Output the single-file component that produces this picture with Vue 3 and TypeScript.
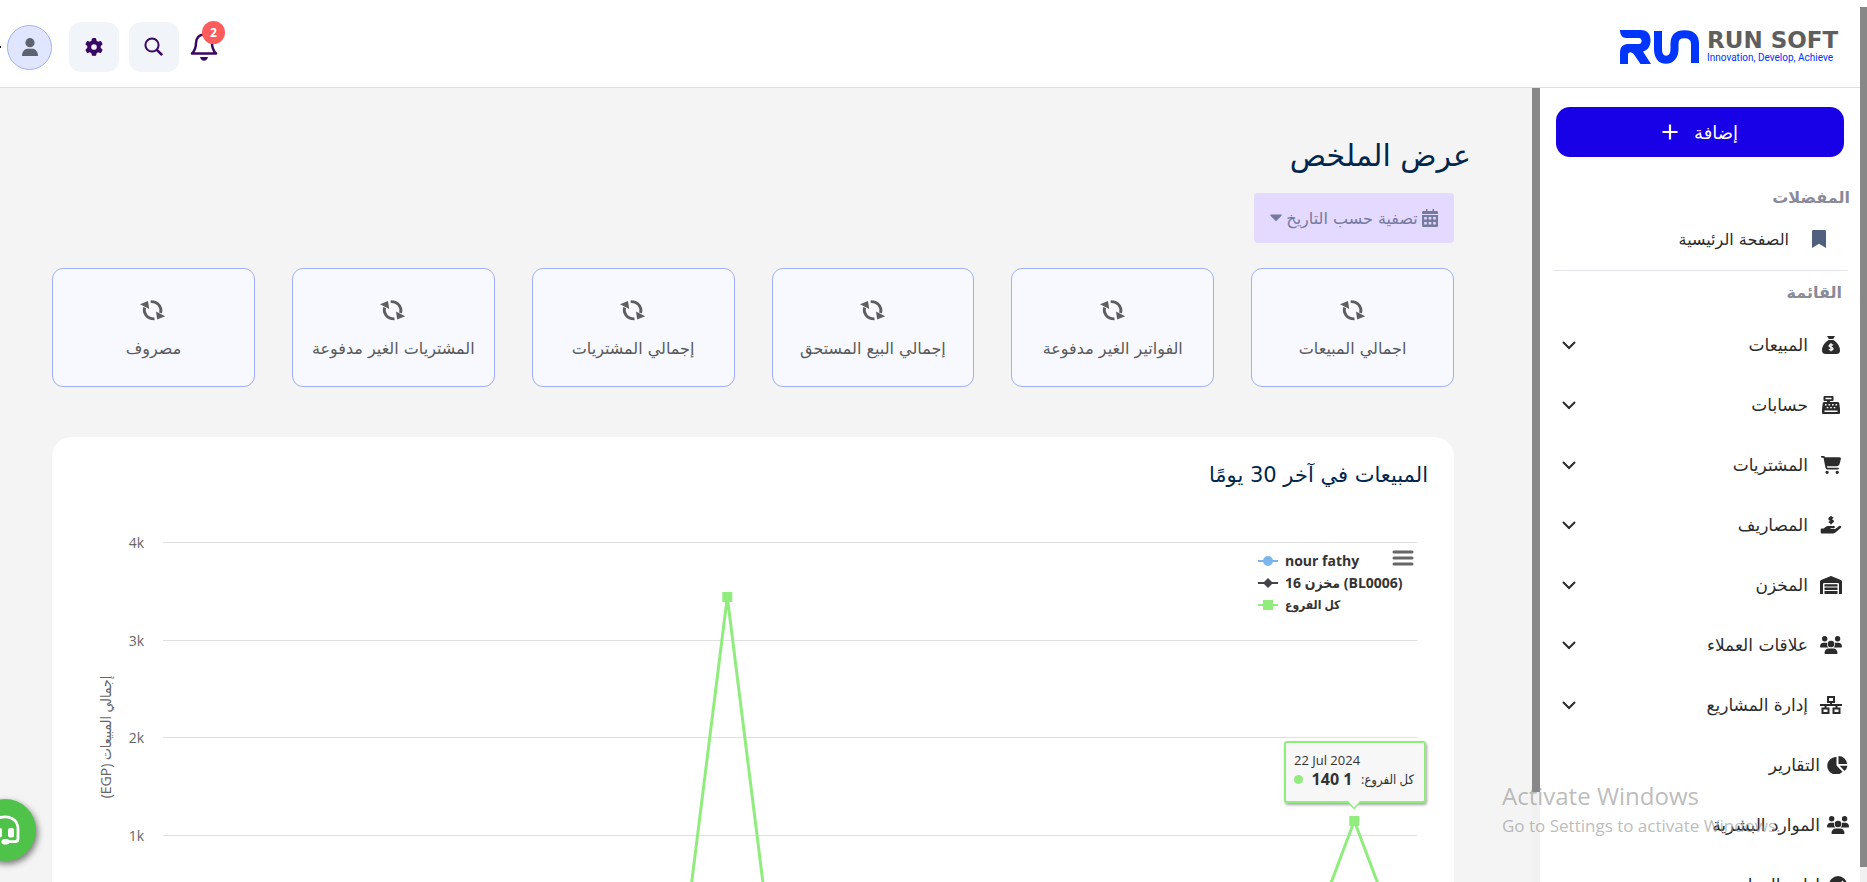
<script setup lang="ts">
import { computed, onBeforeUnmount, onMounted, ref } from 'vue'

interface Icon {
  box: string
  fill?: string
  stroke?: string
  light?: string
}

interface MenuItem {
  label: string
  icon: string
  flat?: boolean
}

const icons: Record<string, Icon> = {
  bag: {
    box: '0 0 22 18',
    fill: 'M7 0h8l-1.800 3h-4.400zM8.600 4h4.800c4.200 2.600 6.600 6.600 6.600 10.500 0 2.300-1.200 3.500-3.500 3.500h-11C3.200 18 2 16.800 2 14.500 2 10.600 4.400 6.600 8.600 4z',
    light: 'M13 9.200c-.6-.6-3.700-1-3.900.6-.1 1.700 4 .9 3.900 2.800-.1 1.700-3.300 1.500-4.100.5M11 7.300v8',
  },
  register: {
    box: '0 0 22 18',
    fill: 'M4.500 0h8a1 1 0 0 1 1 1v3a1 1 0 0 1-1 1H10v1h7.500c1 0 1.600.5 1.800 1.500L20 13v4a1 1 0 0 1-1 1H3a1 1 0 0 1-1-1v-4l.7-5.500C2.900 6.500 3.500 6 4.500 6H7V5H4.500a1 1 0 0 1-1-1V1a1 1 0 0 1 1-1zM5.500 1.800v1.400h6V1.800z',
    light: 'M5 8.800h1.600M8.500 8.800h1.600M12 8.800h1.600M15.500 8.800h1.600M6.700 11.600h1.600M10.200 11.600h1.600M13.700 11.600h1.600M4.500 15.300h13',
  },
  cart: {
    box: '0 0 576 512',
    fill: 'M0 24C0 10.700 10.700 0 24 0H69.500c22 0 41.500 12.800 50.600 32h411c26.300 0 45.500 25 38.600 50.400l-41 152.300c-8.500 31.400-37 53.300-69.500 53.300H170.700l5.400 28.500c2.200 11.300 12.100 19.500 23.600 19.500H488c13.300 0 24 10.700 24 24s-10.700 24-24 24H199.700c-34.600 0-64.300-24.600-70.700-58.500L77.400 54.500c-.7-3.800-4-6.500-7.900-6.500H24C10.700 48 0 37.300 0 24zM128 464a48 48 0 1 1 96 0 48 48 0 1 1-96 0zm336-48a48 48 0 1 1 0 96 48 48 0 1 1 0-96z',
  },
  hand: {
    box: '0 0 22 18',
    fill: 'M1.500 12.500h2.300l1.700-1.400c.8-.6 1.800-1 2.800-1h5.500c1.600 0 1.600 2.200 0 2.200H10.500v.7h4.700l4-2.900c1.400-.9 2.700.7 1.500 1.800l-5 4.300c-1.200 1-2.200 1.300-3.700 1.300H1.500A.8.8 0 0 1 .7 16.800v-3.600a.8.800 0 0 1 .8-.7z',
    stroke: 'M13 2.300c-.8-.8-3.700-1-3.800.4-.1 1.700 3.900.9 3.800 2.600-.1 1.500-3 1.300-4 .3M11 .2v8',
  },
  warehouse: {
    box: '0 0 22 18',
    fill: 'M0 5.600C0 4.800.4 4.200 1.100 3.900L10.300.2a2 2 0 0 1 1.400 0l9.200 3.700c.7.300 1.100.9 1.100 1.700V18h-3V8.200A1.200 1.200 0 0 0 17.800 7H4.200A1.200 1.200 0 0 0 3 8.200V18H0zM4.500 8.300h13v2.300h-13zM4.500 11.600h13v2.400h-13zM4.500 15h13v3h-13z',
  },
  people: {
    box: '0 0 22 18',
    fill: 'M4.700 0a2.700 2.700 0 1 1 0 5.400 2.700 2.700 0 0 1 0-5.400zM17.600 0a2.700 2.700 0 1 1 0 5.400 2.700 2.700 0 0 1 0-5.400zM11 4.700a3.300 3.300 0 1 1 0 6.600 3.300 3.300 0 0 1 0-6.600zM3.600 6.800h2.500c.5 0 .8.100 1 .2-.3 1.700.1 3.300 1.200 4.400H.8c-.5 0-.8-.4-.8-.9 0-2.100 1.600-3.700 3.600-3.700zM15.900 6.800h2.500c2 0 3.600 1.600 3.600 3.700 0 .5-.3.900-.8.900h-7.500c1.100-1.100 1.500-2.700 1.200-4.400.3-.1.600-.2 1-.2zM8.800 12.500h4.400c2.400 0 4.300 1.900 4.300 4.400 0 .6-.5 1.100-1.100 1.100H5.600c-.6 0-1.100-.5-1.100-1.100 0-2.500 1.900-4.400 4.300-4.400z',
  },
  network: {
    box: '0 0 22 18',
    stroke: 'M8 1h6v5H8zM2.500 12.500h6v4.500h-6zM13.500 12.500h6v4.500h-6zM11 6v3M0 9h22M5.500 9v3.500M16.500 9v3.500',
  },
  pie: {
    box: '0 0 22 18',
    fill: 'M9.500 1v8.500l6 6.300A8.800 8.800 0 1 1 9.500 1zM11.500 0a8.500 8.500 0 0 1 8.500 8h-8.500zM12.700 9.700H20.500a8.500 8.500 0 0 1-3 5.200z',
  },
  gauge: {
    box: '0 0 22 18',
    fill: 'M11 0a9 9 0 1 1 0 18 9 9 0 0 1 0-18z',
    light: 'M11 11l5-6',
  },
}

const menu: MenuItem[] = [
  { label: 'المبيعات', icon: 'bag' },
  { label: 'حسابات', icon: 'register' },
  { label: 'المشتريات', icon: 'cart' },
  { label: 'المصاريف', icon: 'hand' },
  { label: 'المخزن', icon: 'warehouse' },
  { label: 'علاقات العملاء', icon: 'people' },
  { label: 'إدارة المشاريع', icon: 'network' },
  { label: 'التقارير', icon: 'pie', flat: true },
  { label: 'الموارد البشرية', icon: 'people', flat: true },
  { label: 'إدارة المهام', icon: 'gauge', flat: true },
]

const stats = [
  'اجمالي المبيعات',
  'الفواتير الغير مدفوعة',
  'إجمالي البيع المستحق',
  'إجمالي المشتريات',
  'المشتريات الغير مدفوعة',
  'مصروف',
]

const sales = Array.from({ length: 30 }, (_, day) => (day === 13 ? 3440 : day === 28 ? 1140 : 0))

const chart = ref<HTMLElement | null>(null)
const width = ref(1402)
const left = 111
const rightInset = 37
const baseline = 419
const perThousand = 97.4
const ticks = [4, 3, 2, 1]

const tickY = (t: number) => Math.round(baseline - t * perThousand)
const points = computed(() => {
  const step = (width.value - left - rightInset) / sales.length
  return sales.map((v, i) => ({
    x: left + step * (i + 0.5),
    y: baseline - (v / 1000) * perThousand,
    v,
  }))
})
const line = computed(() => points.value.map((p) => `${p.x},${p.y}`).join(' '))
const peaks = computed(() => points.value.filter((p) => p.v > 0))
const tip = computed(() => ({
  left: `${Math.round(points.value[28].x - 70)}px`,
  top: `${Math.round(points.value[28].y - 80)}px`,
}))

let observer: ResizeObserver | undefined
onMounted(() => {
  const el = chart.value
  if (!el) return
  width.value = el.clientWidth
  observer = new ResizeObserver(() => (width.value = el.clientWidth))
  observer.observe(el)
})
onBeforeUnmount(() => observer?.disconnect())
</script>

<template>
  <div class="app" dir="rtl">
    <div class="track page-track"><div class="thumb"></div></div>
    <div class="page">
      <header class="header">
        <a class="logo" href="#" dir="ltr">
          <svg class="mark" viewBox="0 0 79 34" aria-hidden="true">
            <path
              d="M0 0h21c6 0 9.500 3.600 9.500 10.500 0 5-2 9.500-7.500 11L31 34H20.500L14 24.500C12 21.500 8 21 8 25v9H0V23c0-6.500 3-9 9-9h10c3.600 0 3.600-6 0-6H6C2.500 8 0 5 0 0z"
              fill="#0034ff"
            />
            <path
              d="M38 1v18c0 7 3 10.800 8 10.800s8.500-3.800 8.500-10.800V14C54.500 7 58 4.200 64.500 4.200S75 7 75 14v19"
              fill="none"
              stroke="#0034ff"
              stroke-width="8"
            />
          </svg>
          <span class="brand">
            <strong>RUN SOFT</strong>
            <span>Innovation, Develop, Achieve</span>
          </span>
        </a>
        <div class="tools">
          <button class="bell" type="button" aria-label="الإشعارات">
            <svg viewBox="0 0 28 28" width="28" height="28">
              <path
                d="M2 20.500h24c-2.800-2.800-4-5.500-4-10.500 0-5-3.300-8.500-8-8.500S6 5 6 10c0 5-1.200 7.700-4 10.500z"
                fill="none"
                stroke="#3b0764"
                stroke-width="2.500"
                stroke-linejoin="round"
              />
              <path d="M10 24h8c-.5 2.400-2 3.700-4 3.700S10.500 26.400 10 24z" fill="#3b0764" />
            </svg>
            <span class="badge">2</span>
          </button>
          <button class="tool" type="button" aria-label="بحث">
            <svg viewBox="0 0 20 20" width="20" height="20" fill="none" stroke="#3b0764">
              <circle cx="8" cy="8" r="6.600" stroke-width="2" />
              <path d="M12.800 12.800l5.400 5.400" stroke-width="2.600" />
            </svg>
          </button>
          <button class="tool" type="button" aria-label="الإعدادات">
            <svg viewBox="0 0 512 512" width="18" height="18" fill="#3b0764">
              <path
                d="M495.900 166.600c3.200 8.700.5 18.400-6.400 24.600l-43.300 39.400c1.100 8.300 1.700 16.800 1.700 25.400s-.6 17.100-1.700 25.400l43.300 39.400c6.900 6.200 9.600 15.900 6.400 24.600c-4.400 11.900-9.700 23.300-15.800 34.300l-4.700 8.100c-6.600 11-14 21.400-22.100 31.200c-5.900 7.200-15.700 9.600-24.500 6.800l-55.700-17.700c-13.400 10.300-28.200 18.900-44 25.400l-12.500 57.100c-2 9.100-9 16.300-18.200 17.800c-13.800 2.300-28 3.500-42.500 3.500s-28.700-1.200-42.500-3.500c-9.200-1.500-16.200-8.700-18.200-17.800l-12.500-57.100c-15.800-6.500-30.600-15.100-44-25.400L83.100 425.900c-8.800 2.800-18.600.3-24.500-6.800c-8.100-9.800-15.500-20.200-22.100-31.200l-4.700-8.100c-6.100-11-11.400-22.400-15.800-34.300c-3.200-8.700-.5-18.400 6.400-24.600l43.300-39.400C64.600 273.100 64 264.600 64 256s.6-17.100 1.700-25.400L22.400 191.200c-6.900-6.200-9.600-15.900-6.400-24.600c4.400-11.900 9.700-23.300 15.800-34.300l4.700-8.100c6.600-11 14-21.400 22.100-31.200c5.900-7.200 15.700-9.600 24.500-6.800l55.700 17.700c13.400-10.300 28.200-18.900 44-25.400l12.500-57.100c2-9.100 9-16.300 18.200-17.800C227.300 1.200 241.500 0 256 0s28.700 1.200 42.500 3.500c9.200 1.500 16.200 8.700 18.200 17.800l12.500 57.100c15.800 6.500 30.600 15.100 44 25.400l55.700-17.700c8.800-2.800 18.600-.3 24.500 6.800c8.100 9.800 15.500 20.200 22.100 31.200l4.700 8.100c6.100 11 11.400 22.400 15.800 34.300zM256 336a80 80 0 1 0 0-160 80 80 0 1 0 0 160z"
              />
            </svg>
          </button>
          <button class="avatar" type="button" aria-label="الحساب">
            <svg viewBox="0 0 18 18" width="18" height="18" fill="#5f6270">
              <circle cx="9" cy="4.700" r="4.600" />
              <path d="M1 18c0-4.500 2.600-7.200 6-7.200h4c3.400 0 6 2.700 6 7.200z" />
            </svg>
          </button>
          <span class="caret"></span>
        </div>
      </header>

      <div class="body">
        <aside class="sidebar">
          <button class="add" type="button">
            <span>إضافة</span>
            <svg viewBox="0 0 16 16" width="16" height="16" stroke="#fff" stroke-width="2.200">
              <path d="M8 .5v15M.5 8h15" />
            </svg>
          </button>
          <h2 class="section favorites">المفضلات</h2>
          <a class="favorite" href="#">
            <svg viewBox="0 0 14 18" width="14" height="18" fill="#52607f">
              <path d="M0 1.500C0 .6.600 0 1.500 0h11c.9 0 1.500.6 1.500 1.500V18l-7-4.200L0 18z" />
            </svg>
            <span>الصفحة الرئيسية</span>
          </a>
          <hr class="divider" />
          <h2 class="section">القائمة</h2>
          <nav class="menu">
            <a v-for="item in menu" :key="item.label" class="item" :class="{ flat: item.flat }" href="#">
              <svg class="icon" :viewBox="icons[item.icon].box">
                <path v-if="icons[item.icon].fill" :d="icons[item.icon].fill" fill="#2b2b2b" fill-rule="evenodd" />
                <path v-if="icons[item.icon].stroke" :d="icons[item.icon].stroke" class="dark" />
                <path v-if="icons[item.icon].light" :d="icons[item.icon].light" class="light" />
              </svg>
              <span class="label">{{ item.label }}</span>
              <svg v-if="!item.flat" class="chevron" viewBox="0 0 14 9" width="14" height="9">
                <path d="M1 1l6 6 6-6" class="dark" />
              </svg>
            </a>
          </nav>
        </aside>
        <div class="track main-track"><div class="thumb"></div></div>

        <main class="main">
          <h1 class="title">عرض الملخص</h1>
          <button class="filter" type="button">
            <svg viewBox="0 0 16 18" width="16" height="18">
              <path
                d="M4 0h1.500v2h5V0H12v2h2.500c.9 0 1.500.6 1.500 1.500V5H0V3.500C0 2.600.6 2 1.500 2H4zM0 6h16v10.500c0 .9-.6 1.500-1.500 1.500h-13C.6 18 0 17.400 0 16.500zM2.200 8v2.500h2.600V8zM6.700 8v2.500h2.600V8zM11.200 8v2.500h2.600V8zM2.200 13v2.500h2.600V13zM6.700 13v2.500h2.600V13zM11.200 13v2.500h2.600V13z"
                fill="#757aa0"
                fill-rule="evenodd"
              />
            </svg>
            <span>تصفية حسب التاريخ</span>
            <svg viewBox="0 0 12 8" width="12" height="8">
              <path d="M1 .5h10c.8 0 1 .7.500 1.200l-5 5c-.3.300-.7.300-1 0l-5-5C0 1.200.2.500 1 .5z" fill="#757aa0" />
            </svg>
          </button>

          <section class="stats">
            <article v-for="label in stats" :key="label" class="stat">
              <svg viewBox="0 0 26 21" width="26" height="21">
                <path
                  d="M4.600 7.500C3 13 7 19 14.500 18.800M20.600 13C22.100 7.500 18.200 1.500 10.700 1.700"
                  fill="none"
                  stroke="#5e5e5e"
                  stroke-width="2.800"
                />
                <path d="M0 4.200L8 1l1.200 8zM25.200 16.300l-8 3.200-1.200-8z" fill="#5e5e5e" />
              </svg>
              <span>{{ label }}</span>
            </article>
          </section>

          <section class="panel">
            <h2>المبيعات في آخر 30 يومًا</h2>
            <div ref="chart" class="chart" dir="ltr">
              <svg :width="width" height="480" class="plot">
                <g v-for="t in ticks" :key="t">
                  <rect :x="left" :y="tickY(t)" :width="width - left - rightInset" height="1" fill="#e0e0e0" />
                  <text x="92" :y="tickY(t) + 6" text-anchor="end" class="tick">{{ t + 'k' }}</text>
                </g>
                <text transform="translate(59 224) rotate(-90)" text-anchor="middle" direction="rtl" class="axis">
                  إجمالي المبيعات (EGP)
                </text>
                <polyline :points="line" fill="none" stroke="#90ed7d" stroke-width="3" stroke-linejoin="round" />
                <rect v-for="p in peaks" :key="p.x" :x="p.x - 5" :y="p.y - 5" width="10" height="10" fill="#90ed7d" />
              </svg>
              <ul class="legend">
                <li>
                  <svg viewBox="0 0 20 12" width="20" height="12">
                    <path d="M0 6h20" stroke="#7cb5ec" stroke-width="2" />
                    <circle cx="10" cy="6" r="5" fill="#7cb5ec" />
                  </svg>
                  <span>nour fathy</span>
                </li>
                <li>
                  <svg viewBox="0 0 20 12" width="20" height="12">
                    <path d="M0 6h20" stroke="#434348" stroke-width="2" />
                    <path d="M10 1l5 5-5 5-5-5z" fill="#434348" />
                  </svg>
                  <span dir="rtl">(BL0006) مخزن 16</span>
                </li>
                <li>
                  <svg viewBox="0 0 20 12" width="20" height="12">
                    <path d="M0 6h20" stroke="#90ed7d" stroke-width="2" />
                    <path d="M5 1h10v10H5z" fill="#90ed7d" />
                  </svg>
                  <span class="small" dir="rtl">كل الفروع</span>
                </li>
              </ul>
              <button class="export" type="button" aria-label="قائمة الرسم البياني">
                <svg viewBox="0 0 22 18" width="22" height="18" stroke="#666" stroke-width="3" stroke-linecap="round">
                  <path d="M2 3h18M2 9h18M2 15h18" />
                </svg>
              </button>
              <div class="tip" :style="tip">
                <span>22 Jul 2024</span>
                <span class="row" dir="rtl">كل الفروع: <b>1 140</b><i class="dot"></i></span>
                <svg class="pointer" viewBox="0 0 16 9" width="16" height="9">
                  <path d="M1 0l7 7.500L15 0" fill="#f7f7f7" stroke="#90ed7d" stroke-width="1.500" />
                </svg>
              </div>
            </div>
          </section>
        </main>
      </div>
    </div>

    <button class="support" type="button" aria-label="الدعم الفني">
      <svg viewBox="0 0 30 30" width="30" height="30">
        <path
          d="M2 20v-6C2 6.500 7.500 1.800 15 1.800S28 6.500 28 14v9.500c0 2-1 3.200-3 3.200H15"
          fill="none"
          stroke="#fff"
          stroke-width="2.800"
        />
        <rect x="6" y="13" width="6" height="9.500" rx="2" fill="#fff" />
        <rect x="18" y="13" width="6" height="9.500" rx="2" fill="#fff" />
        <rect x="11.500" y="24" width="8" height="5.500" rx="2.700" fill="#fff" />
      </svg>
    </button>
    <div class="watermark" dir="ltr">
      <p class="big">Activate Windows</p>
      <p>Go to Settings to activate Windows.</p>
    </div>
  </div>
</template>

<style>
html,
body {
  margin: 0;
  overflow: hidden;
}
</style>

<style scoped>
* {
  box-sizing: border-box;
}
.app {
  position: relative;
  display: flex;
  height: 100vh;
  overflow: hidden;
  background: #fff;
  color: #2b2b2b;
  font-family: 'DejaVu Sans', sans-serif;
  font-size: 16px;
}
button {
  padding: 0;
  border: 0;
  background: none;
  font: inherit;
  color: inherit;
  cursor: pointer;
}
a {
  color: inherit;
  text-decoration: none;
}
h1,
h2,
p,
ul {
  margin: 0;
  padding: 0;
}
svg {
  display: block;
  flex: none;
}
.track {
  flex: none;
  background: #f1f1f1;
}
.thumb {
  background: #888;
}
.page-track {
  width: 7px;
  border-top: 7px solid #fff;
}
.page-track .thumb {
  height: calc(100% - 15px);
}
.main-track {
  width: 8px;
}
.main-track .thumb {
  height: calc(100% - 90px);
}
.page {
  flex: 1;
  min-width: 0;
  display: flex;
  flex-direction: column;
}
.header {
  flex: none;
  display: flex;
  justify-content: space-between;
  align-items: center;
  height: 88px;
  padding: 14px 21px 7px 0;
  border-bottom: 1px solid #e0e0e0;
}
.logo {
  display: flex;
  align-items: center;
  gap: 8px;
}
.mark {
  width: 79px;
  height: 34px;
}
.brand {
  display: flex;
  flex-direction: column;
  gap: 1px;
  width: 132px;
  color: #0034ff;
  font: 400 10px/14px Roboto, sans-serif;
  white-space: nowrap;
}
.brand strong {
  color: #5e5e5e;
  font: 700 23px/20px 'DejaVu Sans', sans-serif;
}
.tools {
  display: flex;
  align-items: center;
}
.bell {
  position: relative;
  margin-left: 11px;
}
.badge {
  position: absolute;
  top: -12px;
  left: 12px;
  width: 23px;
  height: 23px;
  border-radius: 50%;
  background: #ff5c5c;
  color: #fff;
  font: 700 12px/23px 'Open Sans', sans-serif;
  text-align: center;
}
.tool {
  display: grid;
  place-items: center;
  width: 50px;
  height: 50px;
  margin-left: 10px;
  border-radius: 12px;
  background: #f1f4f9;
}
.avatar {
  display: grid;
  place-items: center;
  width: 45px;
  height: 45px;
  margin-right: 7px;
  border: 1px solid #a3b1f5;
  border-radius: 50%;
  background: #e0e6ff;
}
.caret {
  width: 1px;
  height: 2px;
  margin-right: 6px;
  background: #112;
}
.body {
  flex: 1;
  min-height: 0;
  display: flex;
}
.sidebar {
  flex: none;
  width: 320px;
  overflow: hidden;
  background: #fff;
}
.add {
  display: flex;
  align-items: center;
  justify-content: center;
  gap: 16px;
  width: 288px;
  height: 50px;
  margin: 19px 16px 0;
  border-radius: 14px;
  background: #1800e7;
  color: #fff;
  font-size: 18px;
}
.section {
  margin: 0 18px 0 0;
  color: #8a8a99;
  font-size: 16px;
  line-height: 24px;
}
.favorites {
  margin: 29px 10px 0 0;
}
.favorite {
  display: flex;
  align-items: center;
  gap: 23px;
  height: 48px;
  margin: 5px 34px 0 0;
}
.divider {
  height: 1px;
  margin: 7px 12px 10px 13px;
  border: 0;
  background: #e2e4e8;
}
.menu {
  padding-top: 10px;
  font-size: 17px;
}
.item {
  display: flex;
  align-items: center;
  height: 60px;
  padding: 0 18px 0 22px;
}
.item.flat {
  padding-right: 11px;
}
.icon {
  width: 22px;
  height: 18px;
}
.label {
  flex: 1;
  margin-right: 12px;
}
.flat .label {
  margin-right: 7px;
}
.dark {
  fill: none;
  stroke: #2b2b2b;
  stroke-width: 2;
}
.light {
  fill: none;
  stroke: #fff;
  stroke-width: 1.4;
}
.main {
  flex: 1;
  min-width: 0;
  overflow: hidden;
  padding: 44px 78px 0 52px;
  background: #f4f4f4;
}
.title {
  margin-right: -17px;
  color: #00264d;
  font-size: 30px;
  font-weight: 400;
  line-height: 48px;
}
.filter {
  display: flex;
  align-items: center;
  justify-content: center;
  gap: 4px;
  width: 200px;
  height: 50px;
  margin-top: 13px;
  border-radius: 4px;
  background: #e4d9ff;
  color: #757aa0;
  white-space: nowrap;
}
.stats {
  display: grid;
  grid-template-columns: repeat(6, 1fr);
  gap: 37px;
  margin-top: 25px;
}
.stat {
  display: flex;
  flex-direction: column;
  align-items: center;
  height: 119px;
  padding-top: 31px;
  gap: 17px;
  border: 1px solid #9fb0f5;
  border-radius: 11px;
  background: #f8f9ff;
  color: #5a5a5a;
  line-height: 22px;
  white-space: nowrap;
}
.panel {
  margin-top: 50px;
  border-radius: 20px;
  background: #fff;
}
.panel h2 {
  padding: 22px 26px 22px 0;
  color: #00264d;
  font-size: 21px;
  font-weight: 400;
  line-height: 32px;
}
.chart {
  position: relative;
  height: 480px;
  font-family: 'Open Sans', 'DejaVu Sans Condensed', sans-serif;
}
.plot {
  position: absolute;
}
.tick {
  fill: #666;
  font-size: 14px;
}
.axis {
  fill: #666;
  font-size: 14px;
}
.legend {
  position: absolute;
  top: 37px;
  right: 45px;
  width: 151px;
  list-style: none;
  color: #333;
  font-size: 14px;
  font-weight: 700;
  line-height: 22px;
}
.legend li {
  display: flex;
  align-items: center;
  gap: 7px;
  white-space: nowrap;
}
.legend .small {
  font-size: 12px;
}
.export {
  position: absolute;
  top: 36px;
  right: 40px;
}
.tip {
  position: absolute;
  display: flex;
  flex-direction: column;
  width: 142px;
  height: 62px;
  padding: 8px 10px 0 8px;
  border: 2px solid #90ed7d;
  border-radius: 3px;
  background: #f7f7f7;
  box-shadow: 1px 2px 3px rgba(0, 0, 0, 0.35);
  color: #333;
  font-size: 13px;
  line-height: 19px;
  white-space: nowrap;
}
.row {
  display: flex;
  align-items: center;
  justify-content: space-between;
}
.row b {
  font-size: 16px;
}
.dot {
  width: 9px;
  height: 9px;
  border-radius: 50%;
  background: #90ed7d;
}
.pointer {
  position: absolute;
  top: 58px;
  left: 60px;
}
.support {
  position: absolute;
  bottom: 21px;
  left: -26px;
  display: grid;
  place-items: center;
  width: 62px;
  height: 62px;
  border-radius: 50%;
  background: #4fc24a;
  box-shadow: 2px 3px 6px rgba(0, 0, 0, 0.5);
}
.watermark {
  position: absolute;
  right: 82px;
  bottom: 43px;
  width: 283px;
  color: rgba(150, 150, 150, 0.65);
  font: 17px/26px 'Open Sans', sans-serif;
  white-space: nowrap;
  pointer-events: none;
}
.watermark .big {
  font-size: 24px;
  line-height: 34px;
}
</style>
